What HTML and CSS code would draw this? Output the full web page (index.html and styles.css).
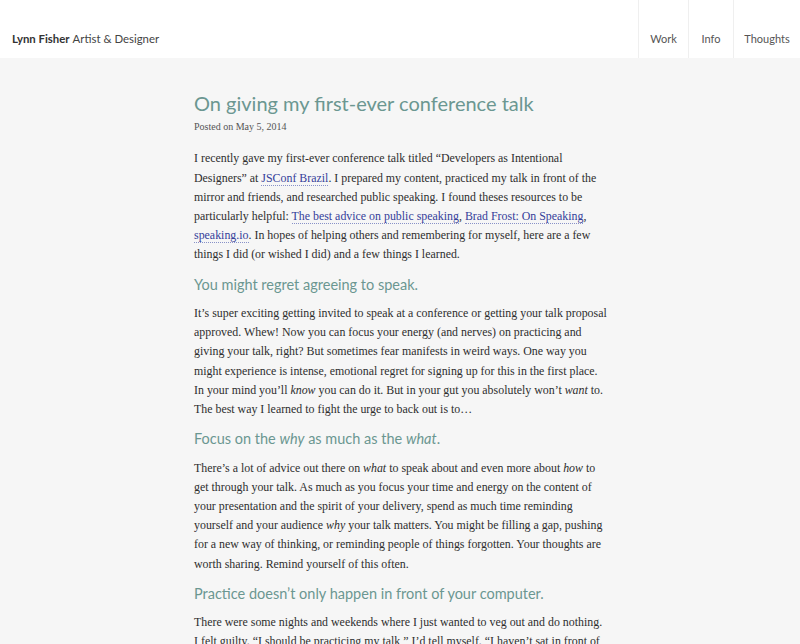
FILE: index.html
```html
<!DOCTYPE html>
<html>
<head>
<meta charset="utf-8">
<link rel="stylesheet" href="styles.css">
</head>
<body>
<header class="site-header">
  <div class="brand"><strong>Lynn Fisher</strong> Artist &amp; Designer</div>
  <nav class="nav">
    <a href="#" class="nav-work">Work</a>
    <a href="#" class="nav-info">Info</a>
    <a href="#" class="nav-thoughts">Thoughts</a>
  </nav>
</header>
<main class="post">
  <h1 class="title">On giving my first-ever conference talk</h1>
  <p class="meta">Posted on May 5, 2014</p>
  <p class="lead">I recently gave my first-ever conference talk titled “Developers as Intentional<br>Designers” at <a href="#">JSConf Brazil</a>. I prepared my content, practiced my talk in front of the<br>mirror and friends, and researched public speaking. I found theses resources to be<br>particularly helpful: <a href="#">The best advice on public speaking</a>, <a href="#">Brad Frost: On Speaking</a>,<br><a href="#">speaking.io</a>. In hopes of helping others and remembering for myself, here are a few<br>things I did (or wished I did) and a few things I learned.</p>
  <h2>You might regret agreeing to speak.</h2>
  <p>It’s super exciting getting invited to speak at a conference or getting your talk proposal<br>approved. Whew! Now you can focus your energy (and nerves) on practicing and<br>giving your talk, right? But sometimes fear manifests in weird ways. One way you<br>might experience is intense, emotional regret for signing up for this in the first place.<br>In your mind you’ll <em>know</em> you can do it. But in your gut you absolutely won’t <em>want</em> to.<br>The best way I learned to fight the urge to back out is to…</p>
  <h2>Focus on the <em>why</em> as much as the <em>what</em>.</h2>
  <p>There’s a lot of advice out there on <em>what</em> to speak about and even more about <em>how</em> to<br>get through your talk. As much as you focus your time and energy on the content of<br>your presentation and the spirit of your delivery, spend as much time reminding<br>yourself and your audience <em>why</em> your talk matters. You might be filling a gap, pushing<br>for a new way of thinking, or reminding people of things forgotten. Your thoughts are<br>worth sharing. Remind yourself of this often.</p>
  <h2>Practice doesn’t only happen in front of your computer.</h2>
  <p>There were some nights and weekends where I just wanted to veg out and do nothing.<br>I felt guilty. “I should be practicing my talk,” I’d tell myself. “I haven’t sat in front of<br>my computer and run through my slides in days.” But practice doesn’t only happen there.</p>
</main>
</body>
</html>
```
FILE: styles.css
```css
html, body { margin: 0; padding: 0; }
body {
  background: #f6f6f6;
  color: #2e2e2e;
  font-family: "Liberation Serif", serif;
  overflow: hidden;
}
.site-header {
  height: 58px;
  background: #fff;
  display: flex;
  align-items: stretch;
  justify-content: space-between;
  font-family: "Lato", "Open Sans", sans-serif;
}
.brand {
  font-size: 11.4px;
  color: #444;
  padding-left: 12px;
  display: flex;
  align-items: center;
  padding-top: 18px;
  box-sizing: border-box;
}
.brand strong { font-weight: 700; color: #333; margin-right: 3px; }
.nav { display: flex; }
.nav a {
  display: flex;
  align-items: center;
  justify-content: center;
  padding-top: 18px;
  box-sizing: border-box;
  border-left: 1px solid #efefef;
  font-size: 11px;
  color: #555;
  text-decoration: none;
}
.nav-work { width: 50px; }
.nav-info { width: 45px; }
.nav-thoughts { width: 67px; }
.post {
  padding: 32px 0 0 194px;
  width: 430px;
}
.title {
  font-family: "Lato", "Open Sans", sans-serif;
  font-weight: 400;
  font-size: 20px;
  color: #6b9791;
  margin: 0;
  line-height: 26px;
}
.meta {
  font-size: 10px;
  color: #555;
  margin: 4px 0 15.4px;
  line-height: 14px;
}
p {
  font-size: 11.9px;
  line-height: 19.2px;
  margin: 0;
  white-space: nowrap;
}
p a {
  color: #35409a;
  text-decoration: none;
  border-bottom: 1px dotted #8891c8;
}
h2 {
  font-family: "Lato", "Open Sans", sans-serif;
  font-weight: 400;
  font-size: 14.5px;
  color: #6b9791;
  margin: 10.2px 0 9.2px;
  line-height: 20px;
}
```
